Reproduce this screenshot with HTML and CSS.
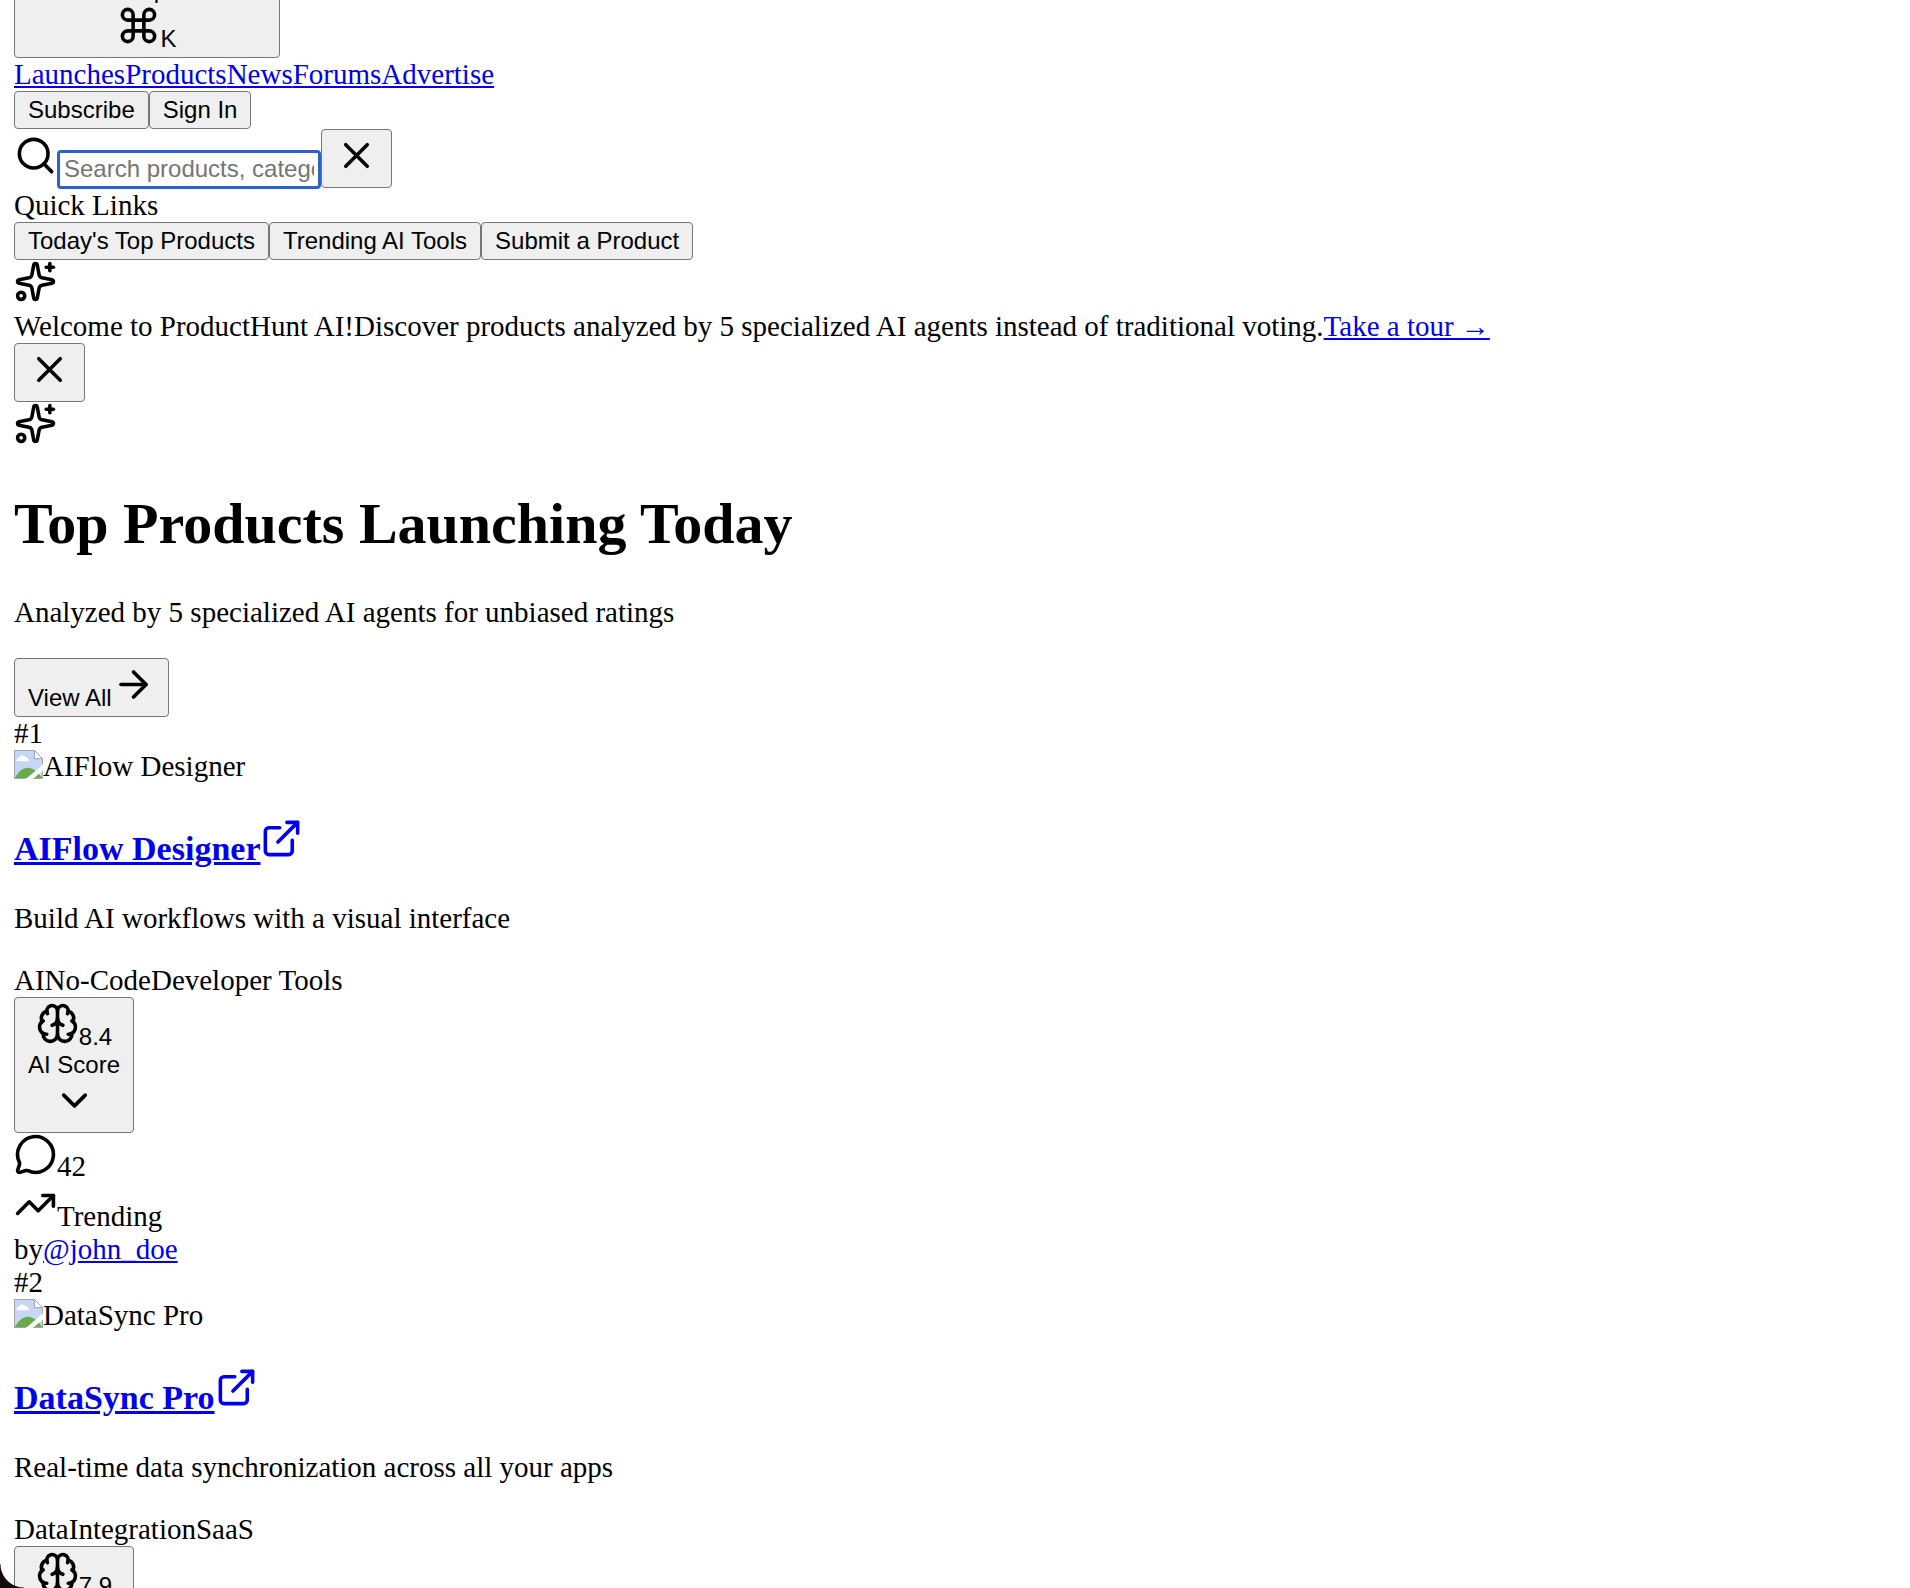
FILE: index.html
```html
<!DOCTYPE html>
<html lang="en">
<head>
<meta charset="utf-8">
<title>ProductHunt AI</title>
<link rel="stylesheet" href="styles.css">
</head>
<body>
<svg class="sprite" aria-hidden="true">
  <symbol id="search" viewBox="0 0 24 24"><path d="m21 21-4.34-4.34"/><circle cx="11" cy="11" r="8"/></symbol>
  <symbol id="command" viewBox="0 0 24 24"><path d="M15 6v12a3 3 0 1 0 3-3H6a3 3 0 1 0 3 3V6a3 3 0 1 0-3 3h12a3 3 0 1 0-3-3"/></symbol>
  <symbol id="x" viewBox="0 0 24 24"><path d="M18 6 6 18"/><path d="m6 6 12 12"/></symbol>
  <symbol id="sparkles" viewBox="0 0 24 24"><path d="M11.017 2.814a1 1 0 0 1 1.966 0l1.051 5.558a2 2 0 0 0 1.594 1.594l5.558 1.051a1 1 0 0 1 0 1.966l-5.558 1.051a2 2 0 0 0-1.594 1.594l-1.051 5.558a1 1 0 0 1-1.966 0l-1.051-5.558a2 2 0 0 0-1.594-1.594l-5.558-1.051a1 1 0 0 1 0-1.966l5.558-1.051a2 2 0 0 0 1.594-1.594z"/><path d="M20 2v4"/><path d="M22 4h-4"/><circle cx="4" cy="20" r="2"/></symbol>
  <symbol id="arrow" viewBox="0 0 24 24"><path d="M5 12h14"/><path d="m12 5 7 7-7 7"/></symbol>
  <symbol id="external" viewBox="0 0 24 24"><path d="M15 3h6v6"/><path d="M10 14 21 3"/><path d="M18 13v6a2 2 0 0 1-2 2H5a2 2 0 0 1-2-2V8a2 2 0 0 1 2-2h6"/></symbol>
  <symbol id="brain" viewBox="0 0 24 24"><path d="M12 18V5"/><path d="M15 13a4.17 4.17 0 0 1-3-4 4.17 4.17 0 0 1-3 4"/><path d="M17.598 6.5A3 3 0 1 0 12 5a3 3 0 1 0-5.598 1.5"/><path d="M17.997 5.125a4 4 0 0 1 2.526 5.77"/><path d="M18 18a4 4 0 0 0 2-7.464"/><path d="M19.967 17.483A4 4 0 1 1 12 18a4 4 0 1 1-7.967-.517"/><path d="M6 18a4 4 0 0 1-2-7.464"/><path d="M6.003 5.125a4 4 0 0 0-2.526 5.77"/></symbol>
  <symbol id="chevron" viewBox="0 0 24 24"><path d="m6 9 6 6 6-6"/></symbol>
  <symbol id="message" viewBox="0 0 24 24"><path d="M2.992 16.342a2 2 0 0 1 .094 1.167l-1.065 3.29a1 1 0 0 0 1.236 1.168l3.413-.998a2 2 0 0 1 1.099.092 10 10 0 1 0-4.777-4.719"/></symbol>
  <symbol id="trending" viewBox="0 0 24 24"><path d="M16 7h6v6"/><path d="m22 7-8.500 8.500-5-5L2 17"/></symbol>
  <symbol id="picture" viewBox="0 0 16 16">
    <path fill="#c6d7f5" stroke="none" d="M.25.25h11l4.500 4.500v11H.25z"/>
    <path fill="#fff" stroke="none" d="M1.500 6.200a1.500 1.500 0 0 1 1.200-2 2 2 0 0 1 3.700-.2A1.600 1.600 0 0 1 8 6.200z"/>
    <path fill="#6aab4c" stroke="none" d="M.5 15.500C2.500 11.500 5.500 9.500 8 9.800c3 .3 5.500 2.700 7.500 5.700z"/>
    <path fill="#fff" stroke="none" d="M16 8v3.200L10.500 16H6.500z"/>
    <path fill="none" stroke="#9b9ba0" stroke-width=".5" stroke-linecap="butt" d="M6.500 15.750H.25V.25h11l4.500 4.500V8M15.750 11.500v4.250H10.500"/>
    <path fill="#fff" stroke="#9b9ba0" stroke-width=".5" d="M11.250.25v4.500h4.500z"/>
  </symbol>
</svg>

<div class="page">
<header>
  <button class="launcher" type="button">
    <span class="line"><svg class="icon"><use href="#search"/></svg>Search products...</span>
    <span class="line"><svg class="icon"><use href="#command"/></svg>K</span>
  </button>
  <nav class="row"><a href="#">Launches</a><a href="#">Products</a><a href="#">News</a><a href="#">Forums</a><a href="#">Advertise</a></nav>
  <div class="row"><button type="button">Subscribe</button><button type="button">Sign In</button></div>
  <div class="row">
    <svg class="icon"><use href="#search"/></svg>
    <input class="search" type="text" aria-label="Search products" placeholder="Search products, categories, or makers...">
    <button type="button" aria-label="Close search"><span class="line"><svg class="icon"><use href="#x"/></svg></span></button>
  </div>
  <div>Quick Links</div>
  <div class="row"><button type="button">Today's Top Products</button><button type="button">Trending AI Tools</button><button type="button">Submit a Product</button></div>
</header>

<section>
  <div><svg class="icon"><use href="#sparkles"/></svg></div>
  <div><span>Welcome to ProductHunt AI!</span><span>Discover products analyzed by 5 specialized AI agents instead of traditional voting.</span><a href="#">Take a tour →</a></div>
  <div class="row"><button type="button" aria-label="Dismiss"><span class="line"><svg class="icon"><use href="#x"/></svg></span></button></div>
</section>

<main>
  <div><svg class="icon"><use href="#sparkles"/></svg></div>
  <h1>Top Products Launching Today</h1>
  <p>Analyzed by 5 specialized AI agents for unbiased ratings</p>
  <div class="row"><button type="button"><span class="line">View All<svg class="icon"><use href="#arrow"/></svg></span></button></div>

  <article>
    <div>#1</div>
    <div class="thumb"><svg class="picture"><use href="#picture"/></svg>AIFlow Designer</div>
    <h3><a href="#">AIFlow Designer<svg class="icon"><use href="#external"/></svg></a></h3>
    <p>Build AI workflows with a visual interface</p>
    <div><span>AI</span><span>No-Code</span><span>Developer Tools</span></div>
    <div class="row"><button type="button">
      <span class="line"><svg class="icon"><use href="#brain"/></svg>8.4</span>
      <span class="line">AI Score</span>
      <span class="line"><svg class="icon"><use href="#chevron"/></svg></span>
    </button></div>
    <div><svg class="icon"><use href="#message"/></svg>42</div>
    <div><svg class="icon"><use href="#trending"/></svg>Trending</div>
    <div>by<a href="#">@john_doe</a></div>
  </article>

  <article>
    <div>#2</div>
    <div class="thumb"><svg class="picture"><use href="#picture"/></svg>DataSync Pro</div>
    <h3><a href="#">DataSync Pro<svg class="icon"><use href="#external"/></svg></a></h3>
    <p>Real-time data synchronization across all your apps</p>
    <div><span>Data</span><span>Integration</span><span>SaaS</span></div>
    <div class="row"><button type="button">
      <span class="line"><svg class="icon"><use href="#brain"/></svg>7.9</span>
      <span class="line">AI Score</span>
      <span class="line"><svg class="icon"><use href="#chevron"/></svg></span>
    </button></div>
  </article>
</main>
</div>
<div class="corner"></div>
</body>
</html>
```
FILE: styles.css
```css
html {
  background: #fff;
}

body {
  height: 100vh;
  margin: 0;
  overflow: hidden;
  display: flow-root;
  font: 29px/33px "Liberation Serif", "Times New Roman", serif;
  color: #000;
}

/* The page sits scrolled part of the way past the launcher button. */
.page {
  margin: -50px 14px 0;
}

a {
  color: #00e;
  text-decoration: underline;
}

.sprite {
  position: absolute;
  width: 0;
  height: 0;
}

.icon {
  width: 43px;
  height: 43px;
  flex: none;
  vertical-align: baseline;
  fill: none;
  stroke: currentColor;
  stroke-width: 2;
  stroke-linecap: round;
  stroke-linejoin: round;
}

.row {
  display: flex;
  align-items: baseline;
}

button,
.search {
  box-sizing: border-box;
  margin: 0;
  font: 24px/28px "Liberation Sans", Arial, sans-serif;
  border-radius: 4px;
}

button {
  padding: 4px 13px;
  border: 1px solid #767676;
  background: #efefef;
  color: #000;
  text-align: center;
}

.launcher {
  display: block;
}

.line {
  display: block;
}

.search {
  width: 264px;
  height: 39px;
  padding: 2px 4px;
  border: 3px solid #2a63cb;
  background: #fff;
  outline: none;
}

.search::placeholder {
  color: #757575;
  opacity: 1;
}

h1 {
  margin: 39px 0;
  font-size: 58px;
  line-height: 66px;
}

h3 {
  margin: 34px 0;
  font-size: 34px;
  line-height: 38px;
}

p {
  margin: 29px 0;
}

.thumb {
  display: flex;
}

.picture {
  width: 29px;
  height: 29px;
}

.corner {
  position: fixed;
  left: 0;
  bottom: 0;
  width: 24px;
  height: 24px;
  background: radial-gradient(circle at 100% 0, transparent 23px, #120a0a 24px);
}
```
